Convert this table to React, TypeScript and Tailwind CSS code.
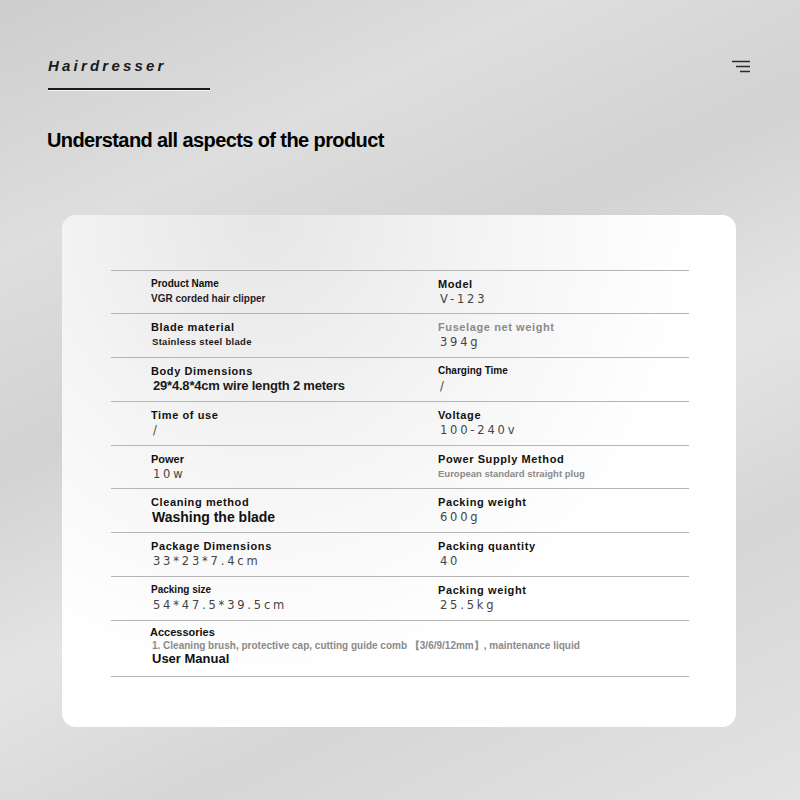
import React from "react"

type Cell = {
  label: string
  labelClass: string
  value: string
  valueClass: string
}

const LABEL_SM = "text-[10px] font-bold text-[#111]"
const LABEL_MD = "text-[11px] font-bold tracking-[0.6px] text-[#111]"
const LABEL_GRAY = "text-[11px] font-bold tracking-[0.6px] text-[#8a8a8a]"
const MONO = "font-['DejaVu_Sans',sans-serif] text-[11.5px] tracking-[2.8px] text-[#444] pl-[2px]"
const SMALL_DARK = "text-[10px] font-bold text-[#2b1a2b]"
const SMALL_GRAY = "text-[9.5px] font-bold text-[#8a8a8a]"

const rows: { h: string; cells: [Cell, Cell] }[] = [
  {
    h: "h-[43px]",
    cells: [
      { label: "Product Name", labelClass: LABEL_SM, value: "VGR corded hair clipper", valueClass: SMALL_DARK },
      { label: "Model", labelClass: LABEL_MD, value: "V-123", valueClass: MONO },
    ],
  },
  {
    h: "h-[44px]",
    cells: [
      { label: "Blade material", labelClass: LABEL_MD, value: "Stainless steel blade", valueClass: "text-[9.5px] font-bold tracking-[0.3px] text-[#1a1a1a] pl-[1px]" },
      { label: "Fuselage net weight", labelClass: LABEL_GRAY, value: "394g", valueClass: MONO },
    ],
  },
  {
    h: "h-[44px]",
    cells: [
      { label: "Body Dimensions", labelClass: LABEL_MD, value: "29*4.8*4cm wire length 2 meters", valueClass: "text-[13px] font-bold tracking-[-0.2px] text-[#1a1a1a] pl-[2px]" },
      { label: "Charging Time", labelClass: LABEL_SM, value: "/", valueClass: MONO },
    ],
  },
  {
    h: "h-[44px]",
    cells: [
      { label: "Time of use", labelClass: LABEL_MD, value: "/", valueClass: MONO },
      { label: "Voltage", labelClass: LABEL_MD, value: "100-240v", valueClass: MONO },
    ],
  },
  {
    h: "h-[43px]",
    cells: [
      { label: "Power", labelClass: "text-[11px] font-bold text-[#111]", value: "10w", valueClass: MONO },
      { label: "Power Supply Method", labelClass: LABEL_MD, value: "European standard straight plug", valueClass: SMALL_GRAY },
    ],
  },
  {
    h: "h-[44px]",
    cells: [
      { label: "Cleaning method", labelClass: LABEL_MD, value: "Washing the blade", valueClass: "text-[14px] font-bold text-[#111] pl-[1px]" },
      { label: "Packing weight", labelClass: LABEL_MD, value: "600g", valueClass: MONO },
    ],
  },
  {
    h: "h-[44px]",
    cells: [
      { label: "Package Dimensions", labelClass: LABEL_MD, value: "33*23*7.4cm", valueClass: MONO },
      { label: "Packing quantity", labelClass: LABEL_MD, value: "40", valueClass: MONO },
    ],
  },
  {
    h: "h-[44px]",
    cells: [
      { label: "Packing size", labelClass: LABEL_SM, value: "54*47.5*39.5cm", valueClass: MONO },
      { label: "Packing weight", labelClass: LABEL_MD, value: "25.5kg", valueClass: MONO },
    ],
  },
]

function SpecCell({ cell }: { cell: Cell }) {
  return (
    <div className="flex flex-col">
      <div className={`leading-[14px] ${cell.labelClass}`}>{cell.label}</div>
      <div className={`leading-[16px] whitespace-nowrap ${cell.valueClass}`}>{cell.value}</div>
    </div>
  )
}

export default function App() {
  return (
    <div className="h-[800px] w-full overflow-hidden bg-[linear-gradient(155deg,#cdcdcd_0%,#dedede_22%,#d2d2d2_40%,#e4e4e4_58%,#d6d6d6_75%,#e3e3e3_100%)] font-['Liberation_Sans',Arial,sans-serif]">
      <header className="flex items-start justify-between pl-[48px] pr-[49px] pt-[56px]">
        <div>
          <div className="text-[15px] italic font-semibold leading-[20px] tracking-[3.2px] text-[#1a1a1a]">
            Hairdresser
          </div>
          <div className="mt-[12px] h-[2px] w-[162px] bg-[#1b1b1b] shadow-[0_1px_0_#f5f5f5]" />
        </div>
        <svg width="20" height="14" viewBox="0 0 20 14" className="mt-[4px]" aria-hidden>
          <path d="M1 1.5H19M5 6.5H19M9 11.5H19" stroke="#2a2a2a" strokeWidth="1.6" />
        </svg>
      </header>

      <h1 className="ml-[47px] mt-[38px] text-[20px] font-bold leading-[24px] tracking-[-0.6px] text-black">
        Understand all aspects of the product
      </h1>

      <section className="ml-[62px] mt-[63px] h-[512px] w-[674px] rounded-[14px] bg-[radial-gradient(ellipse_at_30%_0%,#e6e6e6_0%,#f5f5f5_35%,#ffffff_65%),linear-gradient(90deg,#ececec_0%,#ffffff_12%)] bg-white px-[49px] pt-[55px]">
        <div className="w-[578px] border-b border-[#b5b5b5]">
          {rows.map((row, i) => (
            <div
              key={i}
              className={`grid grid-cols-[287px_1fr] border-t border-[#b5b5b5] pl-[40px] pt-[6px] ${row.h}`}
            >
              <SpecCell cell={row.cells[0]} />
              <SpecCell cell={row.cells[1]} />
            </div>
          ))}
          <div className="h-[56px] border-t border-[#b5b5b5] pl-[39px] pt-[5px]">
            <div className="text-[11px] font-bold leading-[13px] text-[#111]">Accessories</div>
            <div className="mt-[1px] pl-[2px] text-[10px] font-bold leading-[12px] text-[#8a8a8a] whitespace-nowrap">
              1. Cleaning brush, protective cap, cutting guide comb 【3/6/9/12mm】, maintenance liquid
            </div>
            <div className="pl-[2px] text-[13px] font-bold leading-[14px] text-[#111]">User Manual</div>
          </div>
        </div>
      </section>
    </div>
  )
}
